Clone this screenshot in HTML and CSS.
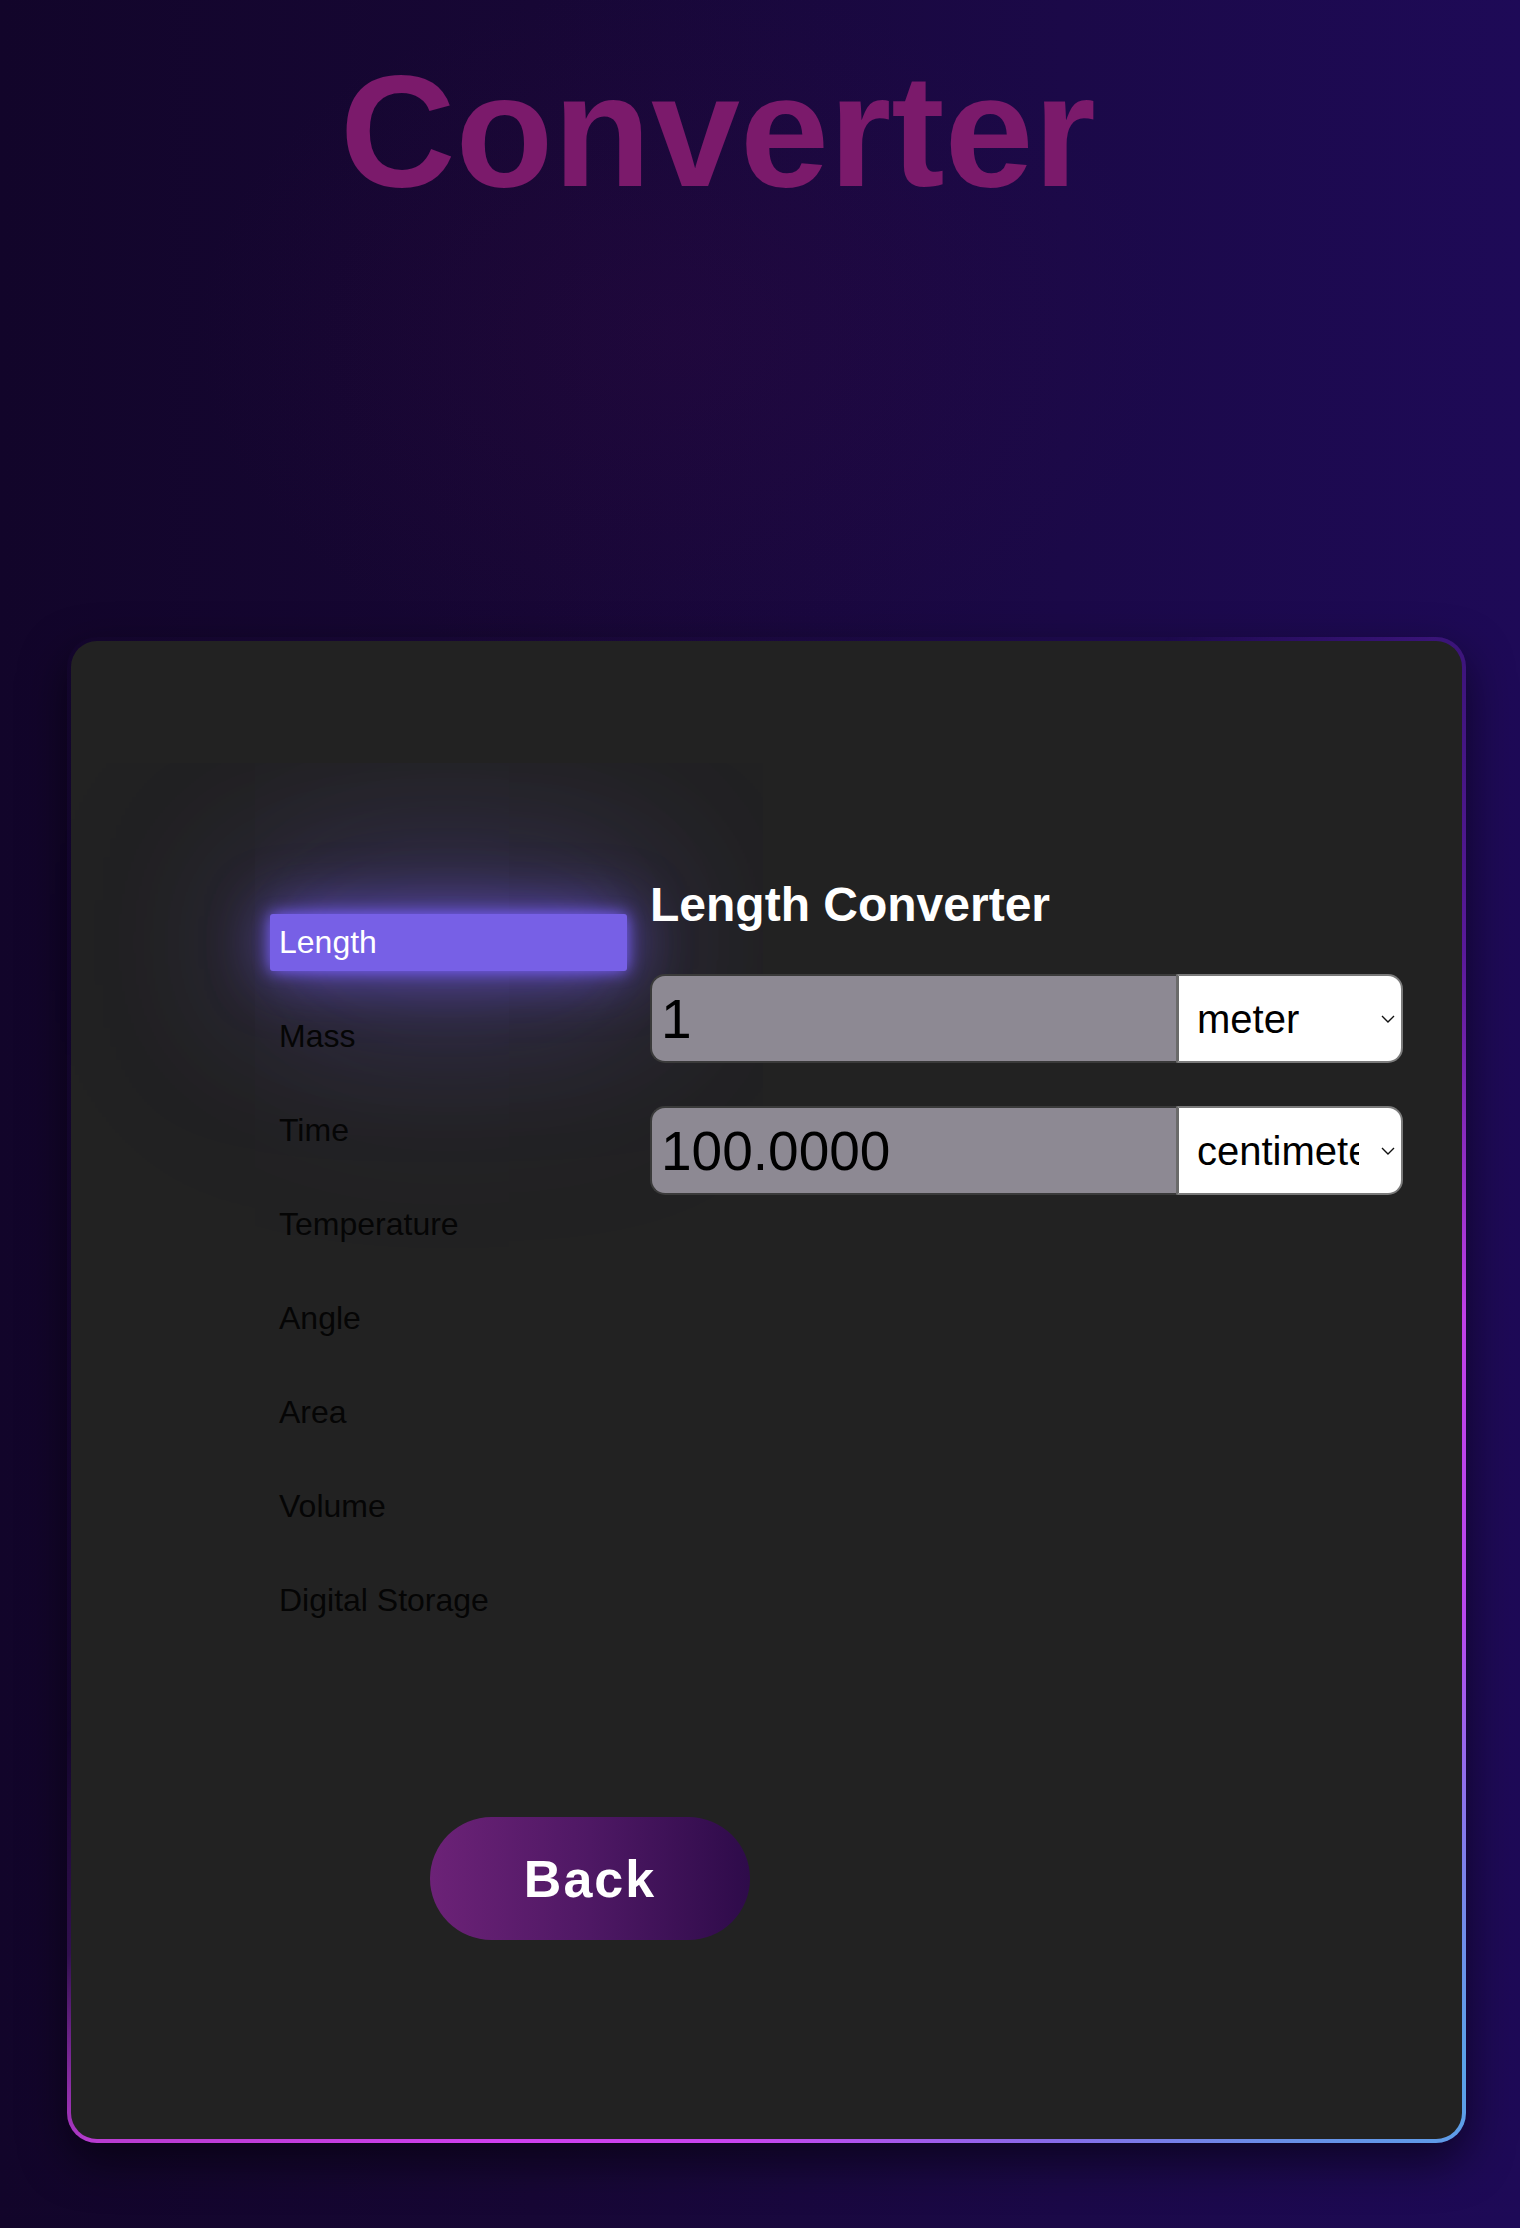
FILE: index.html
```html
<!DOCTYPE html>
<html lang="en">
<head>
<meta charset="utf-8">
<title>Converter</title>
<link rel="stylesheet" href="styles.css">
</head>
<body>
  <h1 class="title">Converter</h1>
  <main class="card">
    <div class="content">
      <nav class="nav">
        <button class="nav-item active">Length</button>
        <button class="nav-item">Mass</button>
        <button class="nav-item">Time</button>
        <button class="nav-item">Temperature</button>
        <button class="nav-item">Angle</button>
        <button class="nav-item">Area</button>
        <button class="nav-item">Volume</button>
        <button class="nav-item">Digital Storage</button>
      </nav>
      <section class="panel">
        <h2 class="panel-title">Length Converter</h2>
        <div class="rows">
          <div class="row">
            <input class="value" type="text" value="1">
            <div class="select-wrap">
              <select class="unit">
                <option>meter</option>
              </select>
              <svg class="chevron" viewBox="0 0 14 8" width="14" height="8"><path d="M1 1 L7 7 L13 1" fill="none" stroke="#111" stroke-width="1.4"/></svg>
            </div>
          </div>
          <div class="row">
            <input class="value" type="text" value="100.0000">
            <div class="select-wrap">
              <select class="unit">
                <option>centimeter</option>
              </select>
              <svg class="chevron" viewBox="0 0 14 8" width="14" height="8"><path d="M1 1 L7 7 L13 1" fill="none" stroke="#111" stroke-width="1.4"/></svg>
            </div>
          </div>
        </div>
      </section>
    </div>
    <div class="actions">
      <button class="back">Back</button>
    </div>
  </main>
</body>
</html>
```

FILE: styles.css
```css
* { box-sizing: border-box; }

html, body {
  margin: 0;
  padding: 0;
}

body {
  width: 1520px;
  min-height: 2228px;
  font-family: "Liberation Sans", Arial, Helvetica, sans-serif;
  background:
    radial-gradient(ellipse 700px 500px at 45% 15%, rgba(60, 10, 70, 0.2), rgba(60, 10, 70, 0) 70%),
    linear-gradient(90deg, #12052a 0%, #170735 35%, #1b0948 70%, #1e0a57 100%);
  overflow: hidden;
}

.title {
  margin: 39px 0 0 0;
  padding-left: 340px;
  font-size: 160px;
  font-weight: 700;
  line-height: 184px;
  color: #7b1a6b;
}

.card {
  margin: 414px 0 0 67px;
  width: 1399px;
  height: 1506px;
  border: 4px solid transparent;
  border-radius: 30px;
  background:
    linear-gradient(#222222, #222222) padding-box,
    conic-gradient(from 0deg at 50% 50%,
      rgba(50, 15, 100, 0) 0deg,
      rgba(50, 15, 100, 0) 28deg,
      #3a1478 42deg,
      #5a1a9a 58deg,
      #c040e8 84deg,
      #b848ee 108deg,
      #5aa2e8 134deg,
      #6a8ee8 146deg,
      #8a6aea 160deg,
      #c845f0 182deg,
      #d040f0 200deg,
      #b83cd0 222deg,
      rgba(120, 40, 160, 0.3) 231deg,
      rgba(50, 15, 100, 0) 244deg,
      rgba(50, 15, 100, 0) 360deg) border-box;
  box-shadow: 0 18px 45px rgba(0, 0, 0, 0.55);
  padding: 236px 59px 0 199px;
}

.content {
  display: flex;
  gap: 23px;
}

.nav {
  width: 357px;
  flex: none;
  padding-top: 37px;
  display: flex;
  flex-direction: column;
  gap: 37px;
}

.nav-item {
  display: block;
  width: 100%;
  height: 57px;
  padding: 10px 9px;
  border: none;
  border-radius: 3px;
  background: transparent;
  font-family: "Liberation Sans", Arial, Helvetica, sans-serif;
  font-size: 32px;
  line-height: 37px;
  color: #050505;
  text-align: left;
}

.nav-item.active {
  background: #7760e6;
  color: #ffffff;
  box-shadow:
    0 0 16px rgba(123, 97, 255, 1),
    0 0 60px rgba(123, 97, 255, 0.75),
    0 0 160px rgba(123, 97, 255, 0.55),
    0 0 320px rgba(123, 97, 255, 0.35);
}

.panel {
  width: 753px;
  flex: none;
}

.panel-title {
  margin: 0;
  font-size: 48px;
  font-weight: 700;
  line-height: 55px;
  color: #ffffff;
}

.rows {
  margin-top: 42px;
  display: flex;
  flex-direction: column;
  gap: 43px;
}

.row {
  display: flex;
  height: 89px;
}

.value {
  width: 526px;
  height: 89px;
  border: 2px solid #3a3a3a;
  border-right: none;
  border-radius: 15px 0 0 15px;
  background: #8d8993;
  padding: 0 0 0 9px;
  font-family: "Liberation Sans", Arial, Helvetica, sans-serif;
  font-size: 55px;
  color: #000000;
  outline: none;
}

.select-wrap {
  position: relative;
  width: 227px;
  height: 89px;
}

.unit {
  appearance: none;
  -webkit-appearance: none;
  width: 227px;
  height: 89px;
  border: 2px solid #7a7a7a;
  border-left: 3px solid #6a6a6a;
  border-radius: 0 15px 15px 0;
  background: #ffffff;
  padding: 0 42px 0 18px;
  font-family: "Liberation Sans", Arial, Helvetica, sans-serif;
  font-size: 40px;
  color: #000000;
  outline: none;
}

.chevron {
  position: absolute;
  right: 8px;
  top: 41px;
  pointer-events: none;
}

.actions {
  margin-top: 188px;
  padding-left: 160px;
}

.back {
  width: 320px;
  height: 123px;
  border: none;
  border-radius: 62px;
  background: linear-gradient(90deg, #6c2277 0%, #4e1864 50%, #2e0b4a 100%);
  font-family: "Liberation Sans", Arial, Helvetica, sans-serif;
  font-size: 52px;
  font-weight: 700;
  letter-spacing: 2px;
  color: #ffffff;
  padding: 0;
}
```
